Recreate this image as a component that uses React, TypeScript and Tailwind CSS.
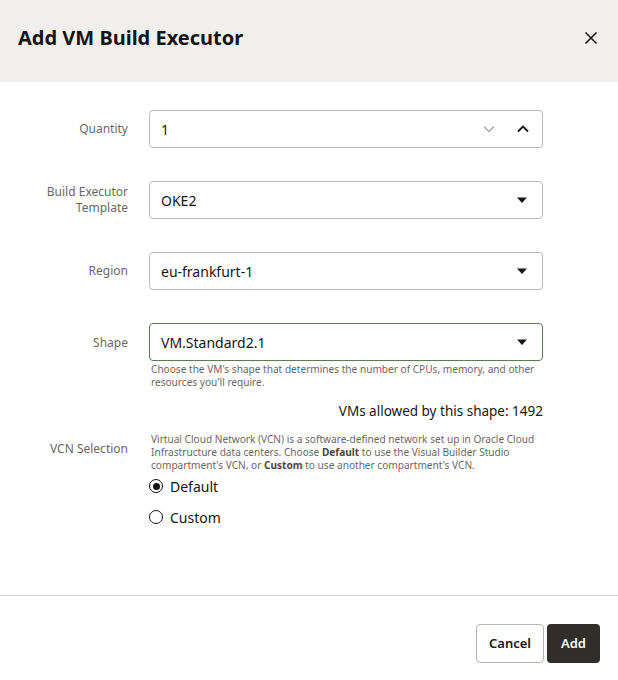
import React from "react";

const font = { fontFamily: '"Noto Sans", "Open Sans", Arial, sans-serif' };

function Caret() {
  return (
    <svg width="12" height="8" viewBox="0 0 12 8" className="shrink-0">
      <path d="M1 1.5 L11 1.5 L6 7 Z" fill="#161513" />
    </svg>
  );
}

function Label({ children }: { children: React.ReactNode }) {
  return (
    <div className="w-[110px] shrink-0 text-right text-[12px] leading-[16px] text-[#6b6763]">
      {children}
    </div>
  );
}

function SelectBox({ value, green }: { value: string; green?: boolean }) {
  return (
    <div
      className={`flex h-[38px] w-[394px] items-center justify-between rounded-[4px] border bg-white pl-[11px] pr-[14px] text-[14px] text-[#161513] ${
        green ? "border-[#5a7d4f]" : "border-[#bcb8b4]"
      }`}
    >
      <span>{value}</span>
      <Caret />
    </div>
  );
}

export default function App() {
  return (
    <div className="relative h-[680px] w-[618px] bg-white" style={font}>
      <div className="flex h-[82px] items-center justify-between bg-[#f1efed] pb-[7px] pl-[18px] pr-[20px]">
        <h1 className="text-[20px] font-bold text-[#161513]">Add VM Build Executor</h1>
        <svg width="14" height="14" viewBox="0 0 14 14">
          <path d="M1.5 1.5 L12.5 12.5 M12.5 1.5 L1.5 12.5" stroke="#161513" strokeWidth="1.6" />
        </svg>
      </div>

      <div className="flex h-[513px] flex-col pl-[18px] pt-[28px]">
        <div className="flex items-center gap-[21px]">
          <Label>Quantity</Label>
          <div className="flex h-[38px] w-[394px] items-center justify-between rounded-[4px] border border-[#bcb8b4] bg-white pl-[11px] pr-[13px] text-[14px] text-[#161513]">
            <span>1</span>
            <div className="flex items-center gap-[22px]">
              <svg width="12" height="8" viewBox="0 0 12 8">
                <path d="M1 1.5 L6 6.5 L11 1.5" fill="none" stroke="#a8a4a0" strokeWidth="1.3" />
              </svg>
              <svg width="12" height="8" viewBox="0 0 12 8">
                <path d="M1 6.5 L6 1.5 L11 6.5" fill="none" stroke="#161513" strokeWidth="1.8" />
              </svg>
            </div>
          </div>
        </div>

        <div className="mt-[33px] flex items-center gap-[21px]">
          <Label>
            <span className="block">Build Executor</span>
            <span className="block">Template</span>
          </Label>
          <SelectBox value="OKE2" />
        </div>

        <div className="mt-[33px] flex items-center gap-[21px]">
          <Label>Region</Label>
          <SelectBox value="eu-frankfurt-1" />
        </div>

        <div className="mt-[33px] flex items-start gap-[21px]">
          <div className="flex h-[38px] items-center pt-[1px]">
            <Label>Shape</Label>
          </div>
          <div className="flex w-[394px] flex-col">
            <SelectBox value="VM.Standard2.1" green />
            <p className="mt-[2px] whitespace-nowrap pl-[2px] text-[10.1px] leading-[13px] text-[#6b6763]">
              Choose the VM's shape that determines the number of CPUs, memory, and other
              <br />
              resources you'll require.
            </p>
            <div className="mt-[13px] text-right text-[13.5px] leading-[18px] text-[#161513]">
              VMs allowed by this shape: 1492
            </div>
          </div>
        </div>

        <div className="mt-[13px] flex items-start gap-[21px]">
          <div className="pt-[8px]">
            <Label>VCN Selection</Label>
          </div>
          <div className="flex w-[394px] flex-col">
            <p className="whitespace-nowrap pl-[2px] text-[10.1px] leading-[13px] text-[#6b6763]">
              Virtual Cloud Network (VCN) is a software-defined network set up in Oracle Cloud
              <br />
              Infrastructure data centers. Choose <b className="text-[#4a4642]">Default</b> to use the Visual Builder Studio
              <br />
              compartment's VCN, or <b className="text-[#4a4642]">Custom</b> to use another compartment's VCN.
            </p>
            <div className="mt-[4px] flex h-[20px] items-center gap-[7px] text-[14px] text-[#161513]">
              <span className="flex h-[14px] w-[14px] items-center justify-center rounded-full border-[1.5px] border-[#161513]">
                <span className="h-[7px] w-[7px] rounded-full bg-[#161513]" />
              </span>
              Default
            </div>
            <div className="mt-[11px] flex h-[20px] items-center gap-[7px] text-[14px] text-[#161513]">
              <span className="h-[14px] w-[14px] rounded-full border-[1.5px] border-[#161513]" />
              Custom
            </div>
          </div>
        </div>
      </div>

      <div className="border-t border-[#d7d3cf]" />
      <div className="flex justify-end gap-[3px] pr-[18px] pt-[28px]">
        <button className="h-[39px] w-[68px] rounded-[4px] border border-[#b8b4b0] bg-white text-[13px] font-semibold text-[#161513]">
          Cancel
        </button>
        <button className="h-[39px] w-[53px] rounded-[4px] bg-[#312d2a] text-[13px] font-semibold text-white">
          Add
        </button>
      </div>
    </div>
  );
}
